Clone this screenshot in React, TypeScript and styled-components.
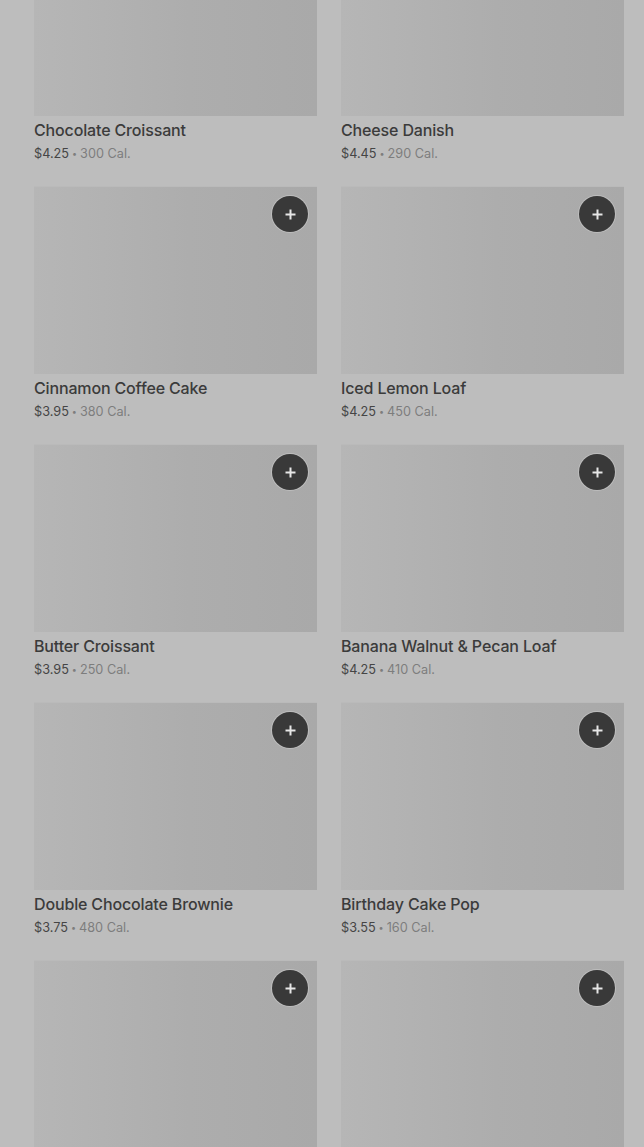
import React from "react";
import styled, { createGlobalStyle } from "styled-components";

const Global = createGlobalStyle`
  html, body { margin: 0; padding: 0; background: #bdbdbd; overflow: hidden; }
  body { font-family: Inter, "Noto Sans", Roboto, sans-serif; }
`;

const Page = styled.div`
  width: 644px;
  height: 1147px;
  overflow: hidden;
  background: #bdbdbd;
`;

const Grid = styled.div`
  display: grid;
  grid-template-columns: 283px 283px;
  column-gap: 24px;
  row-gap: 24px;
  padding: 0 20px 0 34px;
  margin-top: -72px;
`;

const Card = styled.div`
  display: flex;
  flex-direction: column;
`;

const Image = styled.div`
  position: relative;
  height: 188px;
  background: linear-gradient(90deg, #b6b6b6 0%, #adadad 55%, #a9a9a9 100%);
  box-shadow: inset 0 1px 0 #bababa;
`;

const AddButton = styled.button`
  position: absolute;
  top: 10px;
  right: 9px;
  width: 36px;
  height: 36px;
  border-radius: 50%;
  border: none;
  padding: 0;
  background: #393939;
  display: flex;
  align-items: center;
  justify-content: center;
  box-shadow: 0 0 0 1px rgba(210,210,210,0.5);
`;

const Title = styled.div`
  margin-top: 4px;
  font-size: 16px;
  line-height: 20px;
  font-weight: 500;
  color: #3b3b3b;
  letter-spacing: -0.15px;
`;

const Meta = styled.div`
  margin-top: 5px;
  font-size: 12.7px;
  line-height: 17px;
  color: #7d7d7d;
`;

const Price = styled.span`
  color: #454545;
`;

const Dot = styled.span`
  font-size: 9px;
  margin: 0 3px;
  vertical-align: 1px;
`;

type Item = { name?: string; price?: string; cal?: string; add: boolean };

const items: Item[] = [
  { name: "Chocolate Croissant", price: "$4.25", cal: "300", add: false },
  { name: "Cheese Danish", price: "$4.45", cal: "290", add: false },
  { name: "Cinnamon Coffee Cake", price: "$3.95", cal: "380", add: true },
  { name: "Iced Lemon Loaf", price: "$4.25", cal: "450", add: true },
  { name: "Butter Croissant", price: "$3.95", cal: "250", add: true },
  { name: "Banana Walnut & Pecan Loaf", price: "$4.25", cal: "410", add: true },
  { name: "Double Chocolate Brownie", price: "$3.75", cal: "480", add: true },
  { name: "Birthday Cake Pop", price: "$3.55", cal: "160", add: true },
  { add: true },
  { add: true },
];

const Plus = () => (
  <svg width="13" height="13" viewBox="0 0 13 13">
    <path d="M6.5 1.5v10M1.5 6.5h10" stroke="#e6e6e6" strokeWidth="2" strokeLinecap="butt" />
  </svg>
);

export default function App() {
  return (
    <Page>
      <Global />
      <Grid>
        {items.map((it, i) => (
          <Card key={i}>
            <Image>
              {it.add && (
                <AddButton aria-label="Add">
                  <Plus />
                </AddButton>
              )}
            </Image>
            {it.name && (
              <>
                <Title>{it.name}</Title>
                <Meta>
                  <Price>{it.price}</Price>
                  <Dot>•</Dot>
                  {it.cal} Cal.
                </Meta>
              </>
            )}
          </Card>
        ))}
      </Grid>
    </Page>
  );
}
